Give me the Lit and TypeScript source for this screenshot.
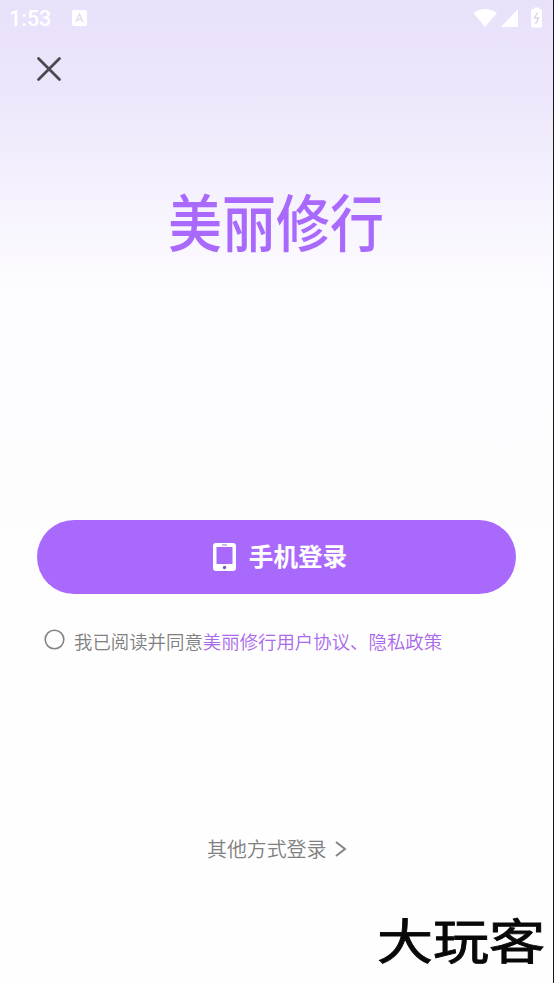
import { LitElement, html, css } from "lit";
import { customElement } from "lit/decorators.js";

@customElement("app-root")
export class AppRoot extends LitElement {
  static styles = css`
    :host {
      display: block;
      font-family: Roboto, "Noto Sans CJK SC", sans-serif;
    }
    .screen {
      box-sizing: border-box;
      width: 554px;
      height: 983px;
      overflow: hidden;
      display: flex;
      flex-direction: column;
      border-right: 1px solid #17151c;
      background: linear-gradient(#e9e0fa 0, #ede6fb 90px, #f4f0fd 180px, #faf8fe 250px, #fdfcff 300px, #fdfdff 400px, #fefefe 650px);
    }
    svg { display: block; flex: none; }
    .status {
      height: 36px;
      display: flex;
      align-items: center;
      color: #fff;
      padding: 0 10px 0 9px;
    }
    .time { font-size: 21.5px; font-weight: 500; line-height: 36px; width: 63px; padding-top: 2px; }
    .spacer { flex: 1; }
    .close { margin: 20px 0 0 36px; }
    .logo {
      margin: 100px 0 0 168px;
      height: 88px;
      font-size: 54px;
      line-height: 88px;
      font-weight: 500;
      color: #aa69fd;
      white-space: nowrap;
      transform: scaleY(1.15);
    }
    .login {
      margin: 250px 37px 0 37px;
      height: 74px;
      border-radius: 37px;
      background: #aa69fd;
      color: #fff;
      display: flex;
      align-items: center;
      justify-content: center;
      gap: 13px;
      font-size: 24.6px;
      font-weight: 700;
      padding-left: 7px;
      box-sizing: border-box;
    }
    .login span { padding-bottom: 4px; }
    .agree {
      margin: 34px 0 0 44px;
      display: flex;
      height: 28px;
      line-height: 30px;
      font-size: 18.42px;
      font-weight: 350;
      color: #808080;
      white-space: nowrap;
    }
    .ring { margin: 1px 9px 0 0; }
    .link { color: #aa69ea; }
    .other {
      margin: 179px 0 0 207px;
      display: flex;
      gap: 8px;
      height: 30px;
      font-size: 19.9px;
      font-weight: 350;
      line-height: 32px;
      color: #808080;
    }
    .chevron { margin-top: 5px; }
    .mark {
      margin: 48px 0 0 377px;
      height: 60px;
      line-height: 60px;
      font-size: 56px;
      font-weight: 400;
      -webkit-text-stroke: 1px #080808;
      stroke-linejoin: round;
      white-space: nowrap;
      color: #080808;
      transform: scaleY(0.85);
    }
  `;

  render() {
    return html`
      <main class="screen">
        <div class="status">
          <span class="time">1:53</span>
          <svg width="15" height="16" viewBox="0 0 15 16">
            <rect width="15" height="16" rx="2" fill="#fff" />
            <path d="M4 12 7.5 4 11 12M5.5 9.5h4" fill="none" stroke="#e5dcf2" stroke-width="1.5" />
          </svg>
          <span class="spacer"></span>
          <svg width="70" height="24" viewBox="0 0 70 24" fill="#fff">
            <path d="M.5 7Q12 -1 24 7L12 21Z" />
            <path d="M45 3V21H28Z" />
            <path d="M61 1.500h5V3h1.500q1.500 0 1.500 1.500V20q0 1.500-1.500 1.500h-8Q58 21.500 58 20V4.500Q58 3 59.500 3H61Z" />
            <path d="M64.500 6.500 61.500 12h4l-3 6" fill="none" stroke="#ddd3ec" stroke-width="1.400" />
          </svg>
        </div>
        <svg class="close" width="26" height="26" viewBox="0 0 26 26">
          <path d="M2.500 2.500 23.500 23.500M23.500 2.500 2.500 23.500" stroke="#4b4852" stroke-width="2.800" stroke-linecap="round" />
        </svg>
        <div class="logo">美丽修行</div>
        <div class="login">
          <svg width="23" height="28" viewBox="0 0 23 28">
            <path fill-rule="evenodd" fill="#fff" d="M3 0H20Q23 0 23 3V25Q23 28 20 28H3Q0 28 0 25V3Q0 0 3 0ZM3.500 4V21H19.500V4Z" />
            <path d="M9 2h5" stroke="#aa69fd" stroke-width="1" />
            <circle cx="11.500" cy="24.500" r="1.700" fill="#8052bd" />
          </svg>
          <span>手机登录</span>
        </div>
        <div class="agree">
          <svg class="ring" width="21" height="21" viewBox="0 0 21 21">
            <circle cx="10.500" cy="10.500" r="9.300" fill="none" stroke="#85828a" stroke-width="1.600" />
          </svg>
          <span>我已阅读并同意</span><span class="link">美丽修行用户协议、隐私政策</span>
        </div>
        <div class="other">
          <span>其他方式登录</span>
          <svg class="chevron" width="13" height="18" viewBox="0 0 13 18">
            <path d="M2 2 11 9 2 16" fill="none" stroke="#858585" stroke-width="2" />
          </svg>
        </div>
        <div class="mark">大玩客</div>
      </main>
    `;
  }
}
